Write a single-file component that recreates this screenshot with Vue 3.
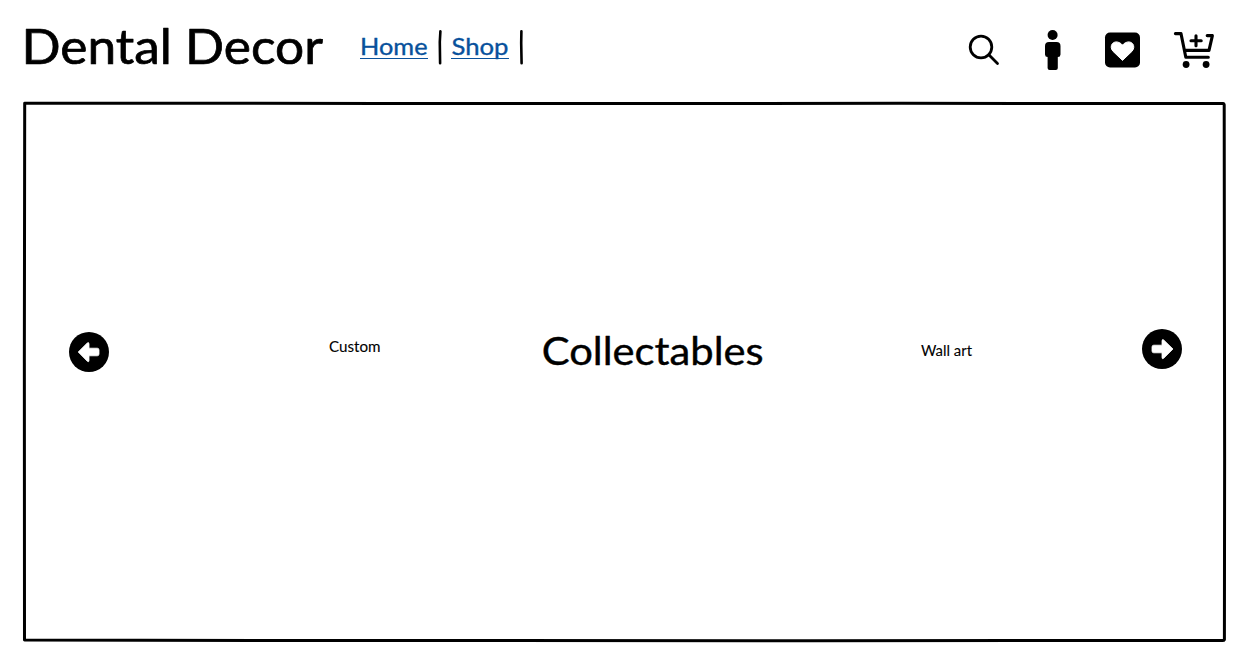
<script setup>
const categories = [
  { name: 'Custom', cls: 'custom', width: 54, height: 20, x: 1, y: 15, length: 51.5 },
  { name: 'Collectables', cls: 'featured', width: 226, height: 42, x: 0.7, y: 33, length: 222 },
  { name: 'Wall art', cls: 'wall', width: 54, height: 20, x: 1, y: 15, length: 51 },
]
</script>

<template>
  <div class="page">
    <header class="header">
      <svg class="brand" width="304" height="50" role="img">
        <text x="-1.5" y="44" textLength="301.5" lengthAdjust="spacingAndGlyphs">Dental Decor</text>
      </svg>
      <nav class="nav">
        <a class="home"><svg width="68" height="30"><text x="0" y="21" textLength="67.5" lengthAdjust="spacingAndGlyphs">Home</text><path d="M0 24.5H68" /></svg></a>
        <svg class="rule" width="4" height="36"><path d="M2.4 2.3 1.8 13 2.1 34.2" /></svg>
        <a class="shop"><svg width="58" height="30"><text x="0.5" y="21" textLength="57" lengthAdjust="spacingAndGlyphs">Shop</text><path d="M0 24.5H58" /></svg></a>
        <svg class="rule last" width="4" height="36"><path d="M2.4 2.3 2.2 14 2.6 34.2" /></svg>
      </nav>
      <div class="actions">
        <svg class="search" width="32" height="32" viewBox="0 0 32 32"><circle cx="13" cy="13" r="10.8" /><path d="m20.8 20.8 8.7 8.6" /></svg>
        <svg class="person" width="16" height="40" viewBox="0 0 16 40"><circle cx="7.6" cy="5" r="5" /><path d="M4 12h7.5a4 4 0 0 1 4 4v8.5a2.6 2.6 0 0 1-2.7 2.5V38q0 2-2 2H4.6q-2 0-2-2V27A2.6 2.6 0 0 1 0 24.5V16a4 4 0 0 1 4-4Z" /></svg>
        <svg class="heart" width="35" height="36" viewBox="0 0 35 36"><rect y="0.5" width="35" height="35" rx="5" /><path d="M17.5 28.4 7.9 19.2C3.6 14 8.2 7.9 14.1 10.5Q16.4 11.6 17.5 13.1 18.6 11.6 20.9 10.5C26.8 7.9 31.4 14 27.1 19.2Z" /></svg>
        <svg class="cart" width="40" height="38" viewBox="0 0 40 38"><path d="M1.4 2.6H7L11.8 26.3H34.3M10.4 19.4H35L38.4 4.6H33.2M22 4.8V14.8M17 9.8H27.2" /><circle cx="12.1" cy="33.5" r="3.4" /><circle cx="32.1" cy="33.5" r="3.4" /></svg>
      </div>
    </header>

    <main class="carousel">
      <svg class="frame" width="1204" height="542" viewBox="0 0 1204 542">
        <path d="M1.7 2.2C240 2.2 400 2.6 620 2.6S960 1.9 1200 2.6Q1201.4 2.6 1201.2 5C1201.6 200 1201.8 360 1201.4 538.6Q1201 539.6 1199 539.5C900 539.7 500 539.7 240 539.5L1.5 539C.9 400 1.6 150 1.7 2.2Z" />
      </svg>
      <svg class="arrow previous" width="40" height="40" viewBox="0 0 40 40"><circle cx="20" cy="20" r="20" /><path d="M9.2 20 18.3 10.9Q20 10 20 12V16.2H28.3Q30 16.2 30 18V22Q30 23.8 28.3 23.8H20V28.5Q20 30.5 18.3 29.3Z" /></svg>
      <svg v-for="item in categories" :key="item.name" :class="['category', item.cls]" :width="item.width" :height="item.height">
        <text :x="item.x" :y="item.y" :textLength="item.length" lengthAdjust="spacingAndGlyphs">{{ item.name }}</text>
      </svg>
      <svg class="arrow next" width="40" height="40" viewBox="0 0 40 40"><circle cx="20" cy="20" r="20" /><path d="M31 20 21.7 10.9Q20 10 20 12V16.2H11.7Q10 16.2 10 18V22Q10 23.8 11.7 23.8H20V28.5Q20 30.5 21.7 29.3Z" /></svg>
    </main>
  </div>
</template>

<style>
body { background: #fff; }
</style>

<style scoped>
.page { box-sizing: border-box; width: 1242px; height: 653px; padding: 20px 16px 11px 23px; overflow: hidden; font-family: Lato, "Open Sans", sans-serif; color: #000; }
svg { display: block; flex: none; overflow: visible; }
text { fill: currentColor; stroke: currentColor; stroke-linejoin: round; }
.header { display: flex; align-items: flex-start; height: 81px; }
.brand { font-size: 48px; }
.brand text { stroke-width: .7px; }
.nav { display: flex; margin-left: 33px; padding-top: 9px; font-size: 23.5px; }
.nav a { padding-top: 5px; color: #08519c; }
.nav a text { stroke-width: .35px; }
.nav a path { stroke: currentColor; stroke-width: 1; }
.rule { margin: 0 9px 0 10px; }
.rule.last { margin-right: 0; }
.rule path { fill: none; stroke: #000; stroke-width: 2.6; stroke-linecap: round; }
.actions { display: flex; margin-left: auto; padding-right: 12px; }
.search { margin: 14px 45px 0 0; }
.search circle, .search path { fill: none; stroke: #000; stroke-width: 2.8; stroke-linecap: round; }
.person { margin: 10px 44px 0 0; }
.heart { margin: 12px 34px 0 0; }
.heart path { fill: #fff; stroke: #fff; stroke-width: 1; stroke-linejoin: round; }
.cart { margin-top: 11px; }
.cart path { fill: none; stroke: #000; stroke-width: 3.1; stroke-linecap: round; stroke-linejoin: round; }
.carousel { display: grid; grid-template-columns: 46px 260px 212px 380px 221px 1fr; width: 1204px; height: 542px; }
.frame { grid-area: 1 / 1 / 2 / 7; }
.frame path { fill: none; stroke: #000; stroke-width: 3; stroke-linejoin: round; }
.arrow path { fill: #fff; stroke: #fff; stroke-width: .8; stroke-linejoin: round; }
.previous { grid-area: 1 / 2; margin-top: 231.4px; }
.custom { grid-area: 1 / 3; margin: 236px 0 0 -1px; }
.featured { grid-area: 1 / 4; margin-top: 231px; }
.wall { grid-area: 1 / 5; margin-top: 240px; margin-left: -1px; }
.next { grid-area: 1 / 6; margin: 228px 0 0 .4px; }
.category { font-size: 14.5px; }
.category text { stroke-width: .1px; }
.category.featured { font-size: 38px; }
.category.featured text { stroke-width: .4px; }
</style>
